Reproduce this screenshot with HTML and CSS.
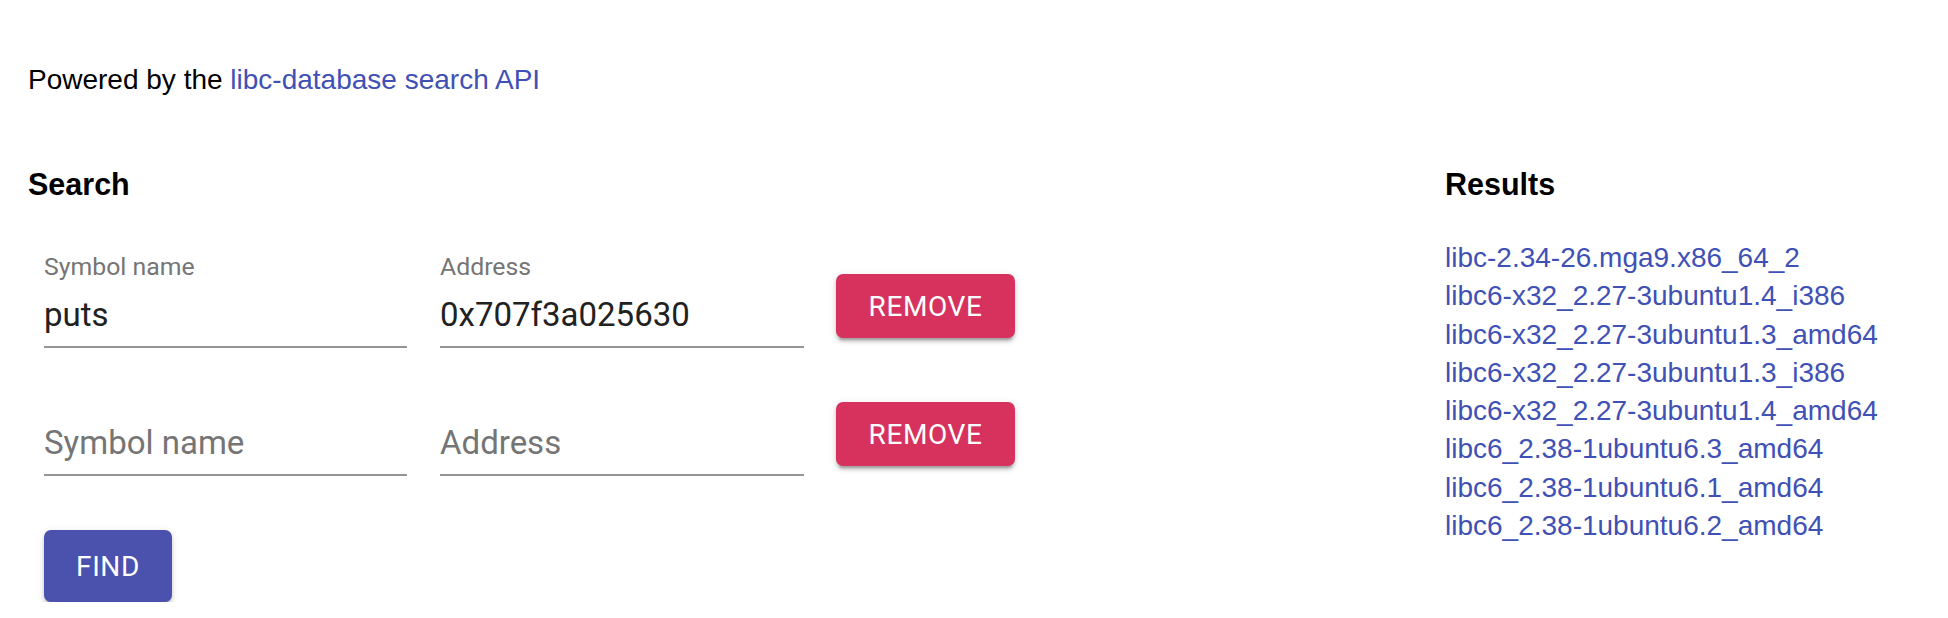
FILE: index.html
```html
<!DOCTYPE html>
<html lang="en">
<head>
<meta charset="utf-8">
<title>libc database search</title>
<link rel="stylesheet" href="styles.css">
</head>
<body>
<div class="page">
  <p class="intro">Powered by the <a class="link" href="#">libc-database search API</a></p>
  <div class="columns">
    <section class="search">
      <h3 class="heading">Search</h3>
      <div class="rows">
        <div class="row">
          <div class="field">
            <label class="label">Symbol name</label>
            <input class="input" type="text" value="puts">
          </div>
          <div class="field">
            <label class="label">Address</label>
            <input class="input" type="text" value="0x707f3a025630">
          </div>
          <button class="btn btn-remove" type="button">Remove</button>
        </div>
        <div class="row">
          <div class="field">
            <label class="label label-empty"></label>
            <input class="input" type="text" placeholder="Symbol name">
          </div>
          <div class="field">
            <label class="label label-empty"></label>
            <input class="input" type="text" placeholder="Address">
          </div>
          <button class="btn btn-remove" type="button">Remove</button>
        </div>
      </div>
      <button class="btn btn-find" type="button">Find</button>
    </section>
    <section class="results">
      <h3 class="heading">Results</h3>
      <ul class="result-list">
        <li><a class="link" href="#">libc-2.34-26.mga9.x86_64_2</a></li>
        <li><a class="link" href="#">libc6-x32_2.27-3ubuntu1.4_i386</a></li>
        <li><a class="link" href="#">libc6-x32_2.27-3ubuntu1.3_amd64</a></li>
        <li><a class="link" href="#">libc6-x32_2.27-3ubuntu1.3_i386</a></li>
        <li><a class="link" href="#">libc6-x32_2.27-3ubuntu1.4_amd64</a></li>
        <li><a class="link" href="#">libc6_2.38-1ubuntu6.3_amd64</a></li>
        <li><a class="link" href="#">libc6_2.38-1ubuntu6.1_amd64</a></li>
        <li><a class="link" href="#">libc6_2.38-1ubuntu6.2_amd64</a></li>
      </ul>
    </section>
  </div>
</div>
</body>
</html>
```

FILE: styles.css
```css
html, body {
  margin: 0;
  padding: 0;
  background: #ffffff;
}

body {
  font-family: "Liberation Sans", Arial, sans-serif;
  font-size: 28px;
  color: #000000;
}

.page {
  padding: 0 28px;
}

.intro {
  margin: 61px 0 0;
  line-height: 38px;
}

.link {
  color: #3f51b5;
  text-decoration: none;
}

.columns {
  display: grid;
  grid-template-columns: 1fr 475px;
  margin-top: 67px;
}

.heading {
  margin: 0;
  font-size: 30.5px;
  font-weight: 700;
  line-height: 36px;
}

.search {
  display: flex;
  flex-direction: column;
  align-items: flex-start;
}

.search .heading {
  margin-bottom: 53px;
}

.rows {
  display: flex;
  flex-direction: column;
  gap: 35px;
  padding-left: 16px;
}

.row {
  display: flex;
  align-items: flex-end;
}

.field {
  display: flex;
  flex-direction: column;
  width: 363px;
  margin-right: 33px;
}

.field + .field {
  width: 364px;
  margin-right: 32px;
}

.label {
  font-family: Roboto, "Liberation Sans", sans-serif;
  font-size: 24.8px;
  line-height: 24px;
  height: 24px;
  color: #757575;
}

.input {
  box-sizing: content-box;
  margin: 15px 0 0;
  padding: 0 0 12px;
  height: 40px;
  border: none;
  border-bottom: 2px solid #949494;
  outline: none;
  background: transparent;
  font-family: Roboto, "Liberation Sans", sans-serif;
  font-size: 33px;
  color: #212121;
}

.input::placeholder {
  color: #757575;
  opacity: 1;
}

.btn {
  border: none;
  border-radius: 7px;
  color: #ffffff;
  font-family: Roboto, "Liberation Sans", sans-serif;
  font-size: 28px;
  font-weight: 400;
  letter-spacing: 0.6px;
  text-transform: uppercase;
  padding: 0;
  box-shadow: 0 5px 2px -3.5px rgba(0, 0, 0, 0.2), 0 3.5px 3.5px 0 rgba(0, 0, 0, 0.14), 0 2px 9px 0 rgba(0, 0, 0, 0.12);
  cursor: pointer;
}

.btn-remove {
  width: 179px;
  height: 64px;
  margin-bottom: 10px;
  background: #d6325d;
}

.btn-find {
  width: 128px;
  height: 72px;
  margin: 54px 0 0 16px;
  background: #4a52ae;
}

.results .heading {
  margin-bottom: 37px;
}

.result-list {
  list-style: none;
  margin: 0;
  padding: 0;
  line-height: 38.3px;
}
```
